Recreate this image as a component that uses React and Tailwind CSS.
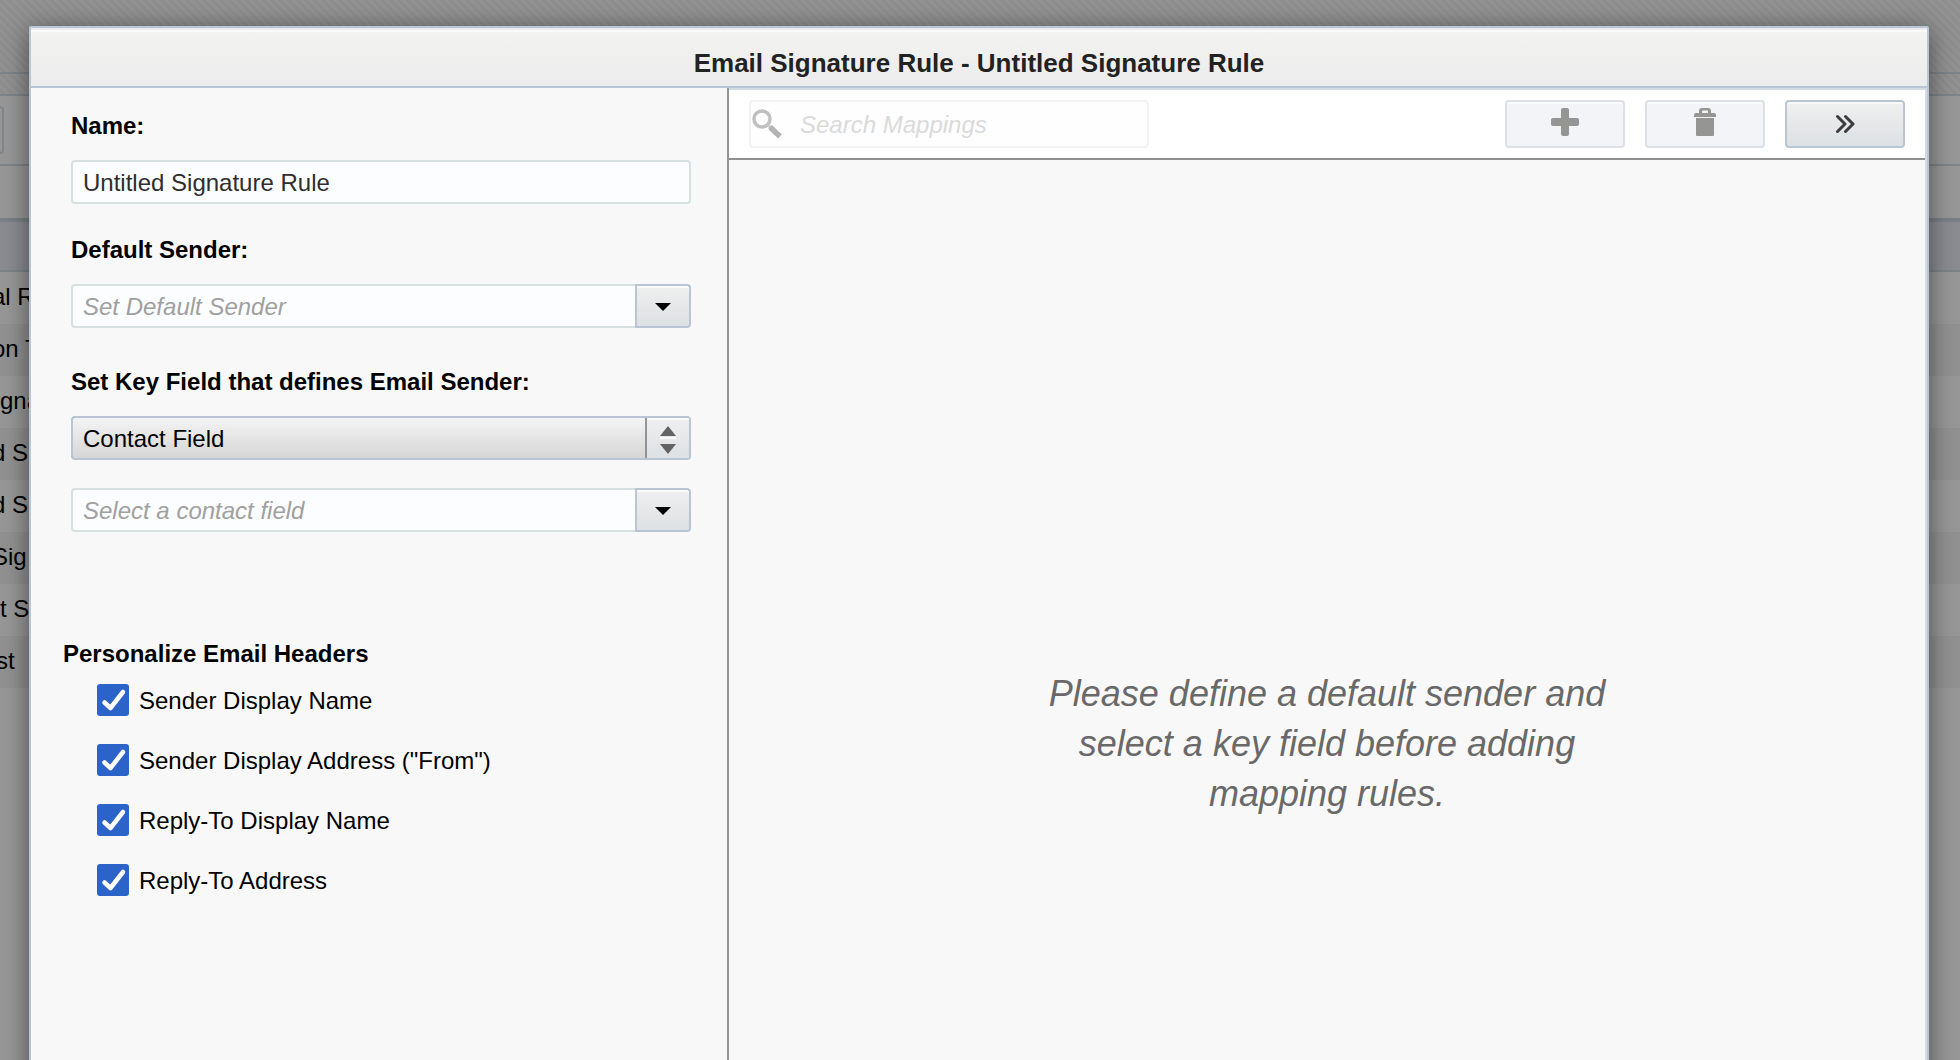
import React, { useState } from "react";

const FIELD =
  "h-11 min-w-0 flex-1 border-2 border-[#d8dfe1] bg-[#fcfdff] px-2.5 pt-0.5 text-2xl text-[#2e2e2e] outline-none placeholder:italic placeholder:text-[#a0a09f]";

const BACKGROUND_ROWS = [
  { text: "al R", pos: "-ml-2", bg: "bg-[#979797]" },
  { text: "on T", pos: "-ml-2", bg: "bg-[#919191]" },
  { text: "gna", pos: "ml-0", bg: "bg-[#979797]" },
  { text: "d S", pos: "-ml-2", bg: "bg-[#919191]" },
  { text: "d S", pos: "-ml-2", bg: "bg-[#979797]" },
  { text: "Sig", pos: "-ml-2", bg: "bg-[#919191]" },
  { text: "t S", pos: "ml-0", bg: "bg-[#979797]" },
  { text: "st", pos: "-ml-1", bg: "bg-[#919191]" },
];

const HEADERS = [
  "Sender Display Name",
  'Sender Display Address ("From")',
  "Reply-To Display Name",
  "Reply-To Address",
];

function Backdrop() {
  return (
    <div aria-hidden="true" className="h-full bg-[#979797] text-2xl text-black">
      <div className="h-[74px] border-b-2 border-[#7e8488] bg-[repeating-linear-gradient(45deg,#949494_0px,#8d8d8d_3px,#949494_6px)]" />
      <div className="h-[22px] border-b-2 border-[#7e8488] bg-[repeating-linear-gradient(45deg,#949494_0px,#8d8d8d_3px,#949494_6px)]" />
      <div className="flex h-[70px] items-center border-b-2 border-[#7e8488]">
        <div className="h-12 w-1 rounded-r border-2 border-l-0 border-[#838689]" />
      </div>
      <div className="h-14 border-b-4 border-[#7a8084]" />
      <div className="h-[50px] border-b-2 border-[#7e8488] bg-[#8b8c92]" />
      {BACKGROUND_ROWS.map((row, i) => (
        <div key={i} className={`flex h-[52px] items-center pb-0.5 whitespace-nowrap ${row.bg}`}>
          <span className={row.pos}>{row.text}</span>
        </div>
      ))}
    </div>
  );
}

function ComboField({ id, label, placeholder }) {
  return (
    <div className="flex">
      <input
        id={id}
        type="text"
        aria-label={label}
        placeholder={placeholder}
        className={`${FIELD} rounded-l border-r-0`}
      />
      <button
        type="button"
        aria-label={`Open ${label}`}
        className="flex h-11 w-14 items-center justify-center rounded-r border-2 border-[#bac4d2] bg-linear-to-b from-[#efefef] to-[#dde1e3] pt-0.5 shadow-[inset_0_2px_0_#f8faf9]"
      >
        <svg width="16" height="8" viewBox="0 0 16 8">
          <path d="M0 0h16L8 8z" fill="#000" />
        </svg>
      </button>
    </div>
  );
}

function Check({ label }) {
  const [on, setOn] = useState(true);
  return (
    <label className="flex h-8 items-center gap-2.5 text-2xl text-black">
      <span className="grid">
        <input
          type="checkbox"
          checked={on}
          onChange={() => setOn(!on)}
          className="col-start-1 row-start-1 size-8 appearance-none rounded-[3px] border-2 border-[#2b63c9] bg-white checked:bg-[#2b63c9]"
        />
        {on && (
          <svg className="pointer-events-none col-start-1 row-start-1" width="32" height="32" viewBox="0 0 32 32" fill="none">
            <path d="M7.500 18.500l6 5.500L26 8" stroke="#fff" strokeWidth="4.500" strokeLinecap="round" strokeLinejoin="round" />
          </svg>
        )}
      </span>
      <span className="pt-0.5">{label}</span>
    </label>
  );
}

function SettingsPane() {
  const [name, setName] = useState("Untitled Signature Rule");
  return (
    <form className="flex w-[698px] shrink-0 flex-col border-r-2 border-[#949494] pt-6 pr-9 pl-10">
      <label htmlFor="rule-name" className="text-2xl leading-7 font-bold text-black">
        Name:
      </label>
      <div className="mt-5 flex">
        <input
          id="rule-name"
          type="text"
          value={name}
          onChange={(e) => setName(e.target.value)}
          className={`${FIELD} rounded`}
        />
      </div>
      <label htmlFor="default-sender" className="mt-8 mb-5 text-2xl leading-7 font-bold text-black">
        Default Sender:
      </label>
      <ComboField id="default-sender" label="Default Sender" placeholder="Set Default Sender" />
      <label htmlFor="key-field" className="mt-10 mb-5 text-2xl leading-7 font-bold text-black">
        Set Key Field that defines Email Sender:
      </label>
      <div className="mb-7 grid">
        <select
          id="key-field"
          className="col-start-1 row-start-1 h-11 w-full appearance-none rounded border-2 border-[#bac4d2] bg-linear-to-b from-[#f4f4f4] to-[#d6d6d6] px-2.5 pt-0.5 text-2xl text-black"
        >
          <option>Contact Field</option>
        </select>
        <span className="pointer-events-none col-start-1 row-start-1 my-0.5 mr-0.5 flex w-11 items-center justify-center justify-self-end border-l-2 border-[#949494] bg-linear-to-b from-[#efefef] to-[#dde1e3] pt-1 shadow-[inset_0_2px_0_#f8faf9]">
          <svg width="18" height="30" viewBox="0 0 18 30">
            <path d="M1 11L9 1l8 10zM1 19h16L9 29z" fill="#636363" />
            <path d="M1 13h16" stroke="#fff" strokeWidth="2" strokeOpacity=".7" />
          </svg>
        </span>
      </div>
      <ComboField id="contact-field" label="contact field" placeholder="Select a contact field" />
      <fieldset className="mt-[108px] -ml-2">
        <legend className="text-2xl leading-7 font-bold text-black">Personalize Email Headers</legend>
        <div className="mt-4 ml-[34px] flex flex-col gap-7">
          {HEADERS.map((h) => (
            <Check key={h} label={h} />
          ))}
        </div>
      </fieldset>
    </form>
  );
}

const DISABLED_BUTTON =
  "flex h-12 w-[120px] justify-center rounded border-2 border-[#dce1e8] bg-[#f3f4f7] pt-1.5 shadow-[inset_0_2px_0_#fafbfc]";

function MappingsPane() {
  return (
    <section className="flex min-w-0 flex-1 flex-col border-t-2 border-r-2 border-[#d3dbe3]">
      <div className="flex h-[70px] shrink-0 items-center gap-5 border-b-2 border-[#909090] bg-white px-5">
        <div className="mr-auto flex h-12 w-[400px] items-center rounded border-2 border-[#f2f2f2] bg-[#fefefe]">
          <svg width="32" height="32" viewBox="0 0 32 32" fill="none" className="shrink-0">
            <circle cx="11" cy="11" r="8" stroke="#c0c0c0" strokeWidth="3.500" />
            <path d="M17 17l3 3" stroke="#cccccc" strokeWidth="3" />
            <path d="M19 19l10 9.500" stroke="#b3b3b3" strokeWidth="5.500" />
          </svg>
          <input
            type="search"
            disabled
            aria-label="Search Mappings"
            placeholder="Search Mappings"
            className="ml-[17px] min-w-0 flex-1 bg-transparent pt-0.5 text-2xl placeholder:text-[#dadada] placeholder:italic"
          />
        </div>
        <button type="button" disabled aria-label="Add mapping" className={DISABLED_BUTTON}>
          <svg width="28" height="28" viewBox="0 0 28 28" fill="#959593">
            <rect x="10" width="8" height="28" rx="2" />
            <rect y="10" width="28" height="8" rx="2" />
          </svg>
        </button>
        <button type="button" disabled aria-label="Delete mapping" className={DISABLED_BUTTON}>
          <svg width="22" height="28" viewBox="0 0 22 28" fill="#959593">
            <path
              fillRule="evenodd"
              d="M5 5V3q0-3 3-3h6q3 0 3 3v2h3q2 0 2 2v2H0V7q0-2 2-2zM8 5h6V3.500q0-1-1-1H9q-1 0-1 1z"
            />
            <path d="M2 10h18v17q0 1-1 1H3q-1 0-1-1z" />
          </svg>
        </button>
        <button
          type="button"
          aria-label="More actions"
          className="flex h-12 w-[120px] items-center justify-center rounded border-2 border-[#bac4d2] bg-linear-to-b from-[#efefef] to-[#dde1e3] shadow-[inset_0_2px_0_#f8faf9]"
        >
          <svg width="20" height="20" viewBox="0 0 20 20" fill="none" stroke="#3c3c3c" strokeWidth="3" strokeLinecap="round" strokeLinejoin="round">
            <path d="M2.500 2.500L10 10l-7.500 7.500M10.500 2.500L18 10l-7.500 7.500" />
          </svg>
        </button>
      </div>
      <div className="flex flex-1 items-center justify-center">
        <p className="w-[580px] text-center text-4xl leading-[50px] text-[#696969] italic">
          Please define a default sender and select a key field before adding mapping rules.
        </p>
      </div>
    </section>
  );
}

export default function App() {
  return (
    <div className="relative h-screen overflow-hidden font-['Liberation_Sans',Arial,sans-serif]">
      <Backdrop />
      <div className="absolute inset-x-0 top-0 flex pt-[26px] pr-[31px] pl-[29px]">
        <div
          role="dialog"
          aria-labelledby="dialog-title"
          className="flex h-[1304px] min-w-0 flex-1 flex-col rounded-t-xs border-2 border-[#bac6d3] bg-[#f8f8f8] shadow-[0_4px_26px_rgba(0,0,0,0.5)]"
        >
          <header className="flex h-[60px] shrink-0 items-center justify-center border-b-2 border-[#bac6d3] bg-linear-to-b from-[#f3f3f2] to-[#ececec] pt-3 shadow-[inset_0_2px_0_#ebebee,inset_0_4px_0_#fafafa]">
            <h1 id="dialog-title" className="text-[26px] leading-8 font-bold text-[#222]">
              Email Signature Rule - Untitled Signature Rule
            </h1>
          </header>
          <div className="flex min-h-0 flex-1">
            <SettingsPane />
            <MappingsPane />
          </div>
        </div>
      </div>
    </div>
  );
}
